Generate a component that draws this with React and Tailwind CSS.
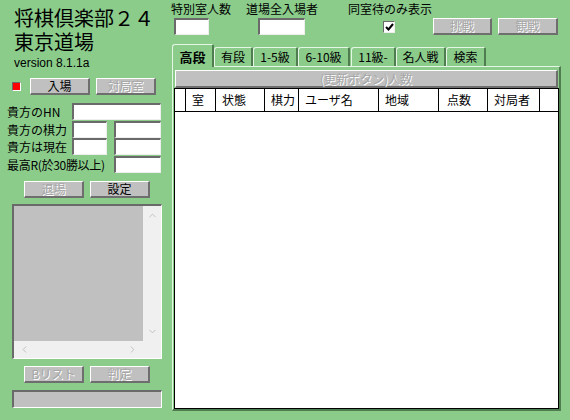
import { ChevronUp, ChevronDown, ChevronLeft, ChevronRight } from "lucide-react";

// raised grey applet button
function Btn({ children, disabled, className = "" }) {
  return (
    <div
      className={`flex items-center justify-center h-[17px] bg-[#c0c0c0] border-t border-l border-t-white border-l-white border-r-2 border-b-2 border-r-[#6e6e6e] border-b-[#6e6e6e] text-[12px] leading-none whitespace-nowrap ${
        disabled ? "text-[#a6a6a6] [text-shadow:1px_1px_0_#ffffff]" : "text-black"
      } ${className}`}
    >
      {children}
    </div>
  );
}

// sunken text field
function Field({ className = "" }) {
  return (
    <div
      className={`h-[17px] shrink-0 bg-white border-t-2 border-l-2 border-t-[#6a6a6a] border-l-[#6a6a6a] border-b border-r border-b-[#eeeeee] border-r-[#eeeeee] ${className}`}
    />
  );
}

function Tab({ children, active, className = "" }) {
  return (
    <div
      className={`flex items-center justify-center shrink-0 bg-[#8bcc8b] border-t border-l border-t-[#e4f6e4] border-l-[#e4f6e4] border-r-2 border-r-[#4f7d4f] rounded-tl-[3px] rounded-tr-[2px] text-[12px] leading-none ${
        active ? "h-[23px] -mb-[1px] relative z-10 font-bold text-[13px]" : "h-[19px]"
      } ${className}`}
    >
      {children}
    </div>
  );
}

const columns = [
  { label: "", w: "w-[11px]" },
  { label: "室", w: "w-[30px]" },
  { label: "状態", w: "w-[49px]" },
  { label: "棋力", w: "w-[34px]" },
  { label: "ユーザ名", w: "w-[80px]" },
  { label: "地域", w: "w-[60px]" },
  { label: "点数", w: "w-[49px]" },
  { label: "対局者", w: "w-[52px]" },
];

export default function App() {
  return (
    <div className="w-[570px] h-[420px] overflow-hidden bg-[#8bcc8b] flex text-black font-['Noto_Sans_CJK_JP',sans-serif]">
      {/* left side */}
      <div className="w-[170px] shrink-0 flex flex-col">
        <div className="pl-[14px] pt-[6px] text-[20px] leading-[24px]">
          <div>将棋倶楽部２４</div>
          <div>東京道場</div>
        </div>
        <div className="pl-[14px] mt-[2px] text-[12px] leading-[14px] font-['Liberation_Sans',sans-serif]">
          version 8.1.1a
        </div>

        <div className="mt-[8px] flex items-center h-[17px]">
          <div className="ml-[12px] w-[9px] h-[9px] bg-[#ff0000] border-t border-l border-t-[#6a6a6a] border-l-[#6a6a6a] border-b border-r border-b-white border-r-white" />
          <Btn className="ml-[9px] w-[60px]">入場</Btn>
          <Btn disabled className="ml-[6px] w-[60px]">対局室</Btn>
        </div>

        <div className="mt-[8px] flex items-center h-[17px] text-[12px]">
          <span className="ml-[7px] w-[65px] shrink-0">貴方のHN</span>
          <Field className="w-[89px]" />
        </div>
        <div className="mt-[1px] flex items-center h-[17px] text-[12px]">
          <span className="ml-[7px] w-[65px] shrink-0">貴方の棋力</span>
          <Field className="w-[35px]" />
          <Field className="ml-[7px] w-[47px]" />
        </div>
        <div className="flex items-center h-[17px] text-[12px]">
          <span className="ml-[7px] w-[65px] shrink-0">貴方は現在</span>
          <Field className="w-[35px]" />
          <Field className="ml-[7px] w-[47px]" />
        </div>
        <div className="mt-[1px] flex items-center h-[17px] text-[12px]">
          <span className="ml-[7px] w-[107px] shrink-0 whitespace-nowrap tracking-[-0.3px]">最高R(於30勝以上)</span>
          <Field className="w-[47px]" />
        </div>

        <div className="mt-[8px] flex">
          <Btn disabled className="ml-[24px] w-[60px]">退場</Btn>
          <Btn className="ml-[6px] w-[60px]">設定</Btn>
        </div>

        {/* list box with scrollbars */}
        <div className="mt-[6px] ml-[12px] w-[150px] h-[155px] flex flex-col bg-[#c0c0c0] border-t-2 border-l-2 border-t-[#6a6a6a] border-l-[#6a6a6a] border-b border-r border-b-white border-r-white">
          <div className="flex flex-1">
            <div className="flex-1" />
            <div className="w-[18px] bg-[#f0f0f0] flex flex-col items-center justify-between py-[4px]">
              <ChevronUp size={11} strokeWidth={2} className="text-[#bdbdbd]" />
              <ChevronDown size={11} strokeWidth={2} className="text-[#bdbdbd]" />
            </div>
          </div>
          <div className="h-[17px] bg-[#f0f0f0] flex items-center justify-between pl-[5px] pr-[23px]">
            <ChevronLeft size={11} strokeWidth={2} className="text-[#bdbdbd]" />
            <ChevronRight size={11} strokeWidth={2} className="text-[#bdbdbd]" />
          </div>
        </div>

        <div className="mt-[7px] flex">
          <Btn disabled className="ml-[24px] w-[60px]">Bリスト</Btn>
          <Btn disabled className="ml-[6px] w-[60px]">判定</Btn>
        </div>

        <div className="mt-[7px] ml-[12px] w-[150px] h-[18px] bg-[#c0c0c0] border-t-2 border-l-2 border-t-[#6a6a6a] border-l-[#6a6a6a] border-b border-r border-b-white border-r-white" />
      </div>

      {/* right side */}
      <div className="flex-1 flex flex-col">
        <div className="h-[44px] flex items-start text-[12px] leading-[16px]">
          <div className="ml-[1px] w-[75px] pt-[1px] flex flex-col">
            <span>特別室人数</span>
            <Field className="mt-[1px] ml-[3px] w-[35px]" />
          </div>
          <div className="w-[102px] pt-[1px] flex flex-col">
            <span>道場全入場者</span>
            <Field className="mt-[1px] ml-[12px] w-[47px]" />
          </div>
          <div className="w-[85px] pt-[1px] flex flex-col">
            <span className="whitespace-nowrap">同室待のみ表示</span>
            <div className="mt-[4px] ml-[35px] w-[12px] h-[12px] bg-white border-t border-l border-t-[#6a6a6a] border-l-[#6a6a6a] border-b border-r border-b-[#eeeeee] border-r-[#eeeeee] flex items-center justify-center">
              <svg width="9" height="8" viewBox="0 0 9 8">
                <path d="M1 4 L3.5 6.5 L8 1" fill="none" stroke="#000" strokeWidth="2" />
              </svg>
            </div>
          </div>
          <div className="pt-[18px] flex">
            <Btn disabled className="w-[59px]">挑戦</Btn>
            <Btn disabled className="ml-[6px] w-[60px]">観戦</Btn>
          </div>
        </div>

        {/* tabs */}
        <div className="h-[22px] ml-[2px] flex items-end">
          <Tab active className="w-[42px]">高段</Tab>
          <Tab className="w-[39px]">有段</Tab>
          <Tab className="w-[45px]">1-5級</Tab>
          <Tab className="w-[52px]">6-10級</Tab>
          <Tab className="ml-[1px] w-[45px]">11級-</Tab>
          <Tab className="w-[50px]">名人戦</Tab>
          <Tab className="w-[40px]">検索</Tab>
        </div>

        {/* panel */}
        <div className="ml-[2px] w-[389px] h-[345px] flex flex-col pl-[1px] pt-[3px] border-t border-l border-t-[#e4f6e4] border-l-[#e4f6e4] border-r-2 border-b-2 border-r-[#4f7d4f] border-b-[#4f7d4f]">
          <div className="ml-[1px] w-[383px] h-[18px] shrink-0">
            <Btn disabled className="w-full h-[18px]">(更新ボタン)人数</Btn>
          </div>
          <div className="w-[385px] flex-1 flex flex-col bg-white border border-black">
            <div className="h-[23px] flex border-b border-black text-[12px] leading-none">
              {columns.map((c, i) => (
                <div key={i} className={`${c.w} shrink-0 border-r border-black flex items-center ${i === 6 ? "pl-[8px]" : "pl-[6px]"}`}>
                  {c.label}
                </div>
              ))}
              <div className="flex-1" />
            </div>
            <div className="flex-1" />
          </div>
        </div>
      </div>
    </div>
  );
}
